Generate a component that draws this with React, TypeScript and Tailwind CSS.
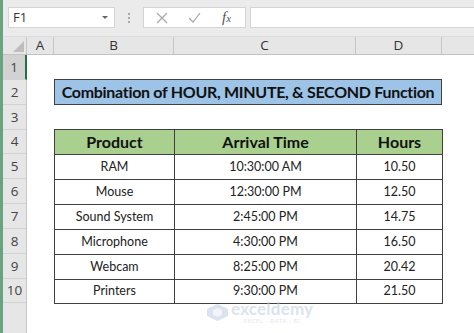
import React from 'react';

const rows = [
  { product: 'RAM', time: '10:30:00 AM', hours: '10.50' },
  { product: 'Mouse', time: '12:30:00 PM', hours: '12.50' },
  { product: 'Sound System', time: '2:45:00 PM', hours: '14.75' },
  { product: 'Microphone', time: '4:30:00 PM', hours: '16.50' },
  { product: 'Webcam', time: '8:25:00 PM', hours: '20.42' },
  { product: 'Printers', time: '9:30:00 PM', hours: '21.50' },
];

// row heights of the sheet rows 1..11
const rowHeights = [25, 25, 25, 24, 25, 25, 25, 25, 25, 24, 40];

const ui = { fontFamily: '"Open Sans", "Noto Sans", sans-serif' };
const cell = { fontFamily: 'Lato, "Open Sans", sans-serif' };

function Toolbar() {
  return (
    <div className="h-[37px] bg-[#ebebeb] flex items-start pt-[7px] border-b border-[#dcdcdc]">
      <div className="ml-[5px] w-[107px] h-[21px] bg-white border border-[#d4d4d4] flex items-center justify-between pl-[4px] pr-[6px]">
        <span className="text-[13px] text-[#333]" style={ui}>
          F1
        </span>
        <span className="w-0 h-0 border-l-[3px] border-r-[3px] border-t-[3px] border-l-transparent border-r-transparent border-t-[#666]" />
      </div>
      <div className="w-[28px] h-[21px] flex flex-col items-center justify-center gap-[2px]">
        <span className="w-[2px] h-[2px] bg-[#a8a8a8]" />
        <span className="w-[2px] h-[2px] bg-[#a8a8a8]" />
        <span className="w-[2px] h-[2px] bg-[#a8a8a8]" />
      </div>
      <div className="w-[103px] h-[21px] bg-white border border-[#d4d4d4] flex items-center">
        <svg width="12" height="12" viewBox="0 0 12 12" className="ml-[12px]">
          <path d="M1 1 L11 11 M11 1 L1 11" stroke="#a6a6a6" strokeWidth="1.2" fill="none" />
        </svg>
        <svg width="13" height="11" viewBox="0 0 13 11" className="ml-[20px]">
          <path d="M1 6 L5 10 L12 1" stroke="#a6a6a6" strokeWidth="1.2" fill="none" />
        </svg>
        <span
          className="ml-[21px] text-[15px] italic text-[#555] leading-none"
          style={{ fontFamily: '"Liberation Serif", serif' }}
        >
          f<span className="text-[11px]">x</span>
        </span>
      </div>
      <div className="ml-[4px] flex-1 h-[21px] bg-white border border-[#d4d4d4] border-r-0" />
    </div>
  );
}

function ColumnHeaders() {
  const cols = [
    { label: 'A', w: 'w-[27px]' },
    { label: 'B', w: 'w-[120px]' },
    { label: 'C', w: 'w-[182px]' },
    { label: 'D', w: 'w-[86px]' },
    { label: '', w: 'flex-1' },
  ];
  return (
    <div className="h-[18px] flex bg-[#e6e6e6] border-b border-[#c2c2c2]" style={ui}>
      <div className="w-[24px] h-full border-r border-[#c6c6c6] flex items-end justify-end pr-[2px] pb-[2px]">
        <svg width="11" height="11" viewBox="0 0 11 11">
          <path d="M11 0 L11 11 L0 11 Z" fill="#bdbdbd" />
        </svg>
      </div>
      {cols.map((c, i) => (
        <div
          key={i}
          className={`${c.w} h-full flex items-center justify-center text-[13.5px] text-[#333] ${
            c.label ? 'border-r border-[#c6c6c6]' : ''
          }`}
        >
          {c.label}
        </div>
      ))}
    </div>
  );
}

function RowHeaders() {
  return (
    <div className="w-[24px] flex flex-col bg-[#e6e6e6] border-r border-[#c6c6c6]" style={ui}>
      {rowHeights.map((h, i) => (
        <div
          key={i}
          style={{ height: h }}
          className={`shrink-0 flex items-center justify-center text-[13.5px] text-[#444] border-b border-[#d2d2d2] ${
            i === 0 ? 'bg-[#d2d2d2] border-r-2 border-r-[#217346] -mr-[1px]' : ''
          }`}
        >
          {i < 10 ? i + 1 : ''}
        </div>
      ))}
    </div>
  );
}

function Sheet() {
  return (
    <div className="flex-1 bg-white relative" style={cell}>
      <div className="h-[25px]" />
      <div className="h-[25px] pl-[27px]">
        <div className="w-[388px] h-[26px] -mt-[1px] bg-[#9dc3e6] border border-[#404040] flex items-center justify-center text-[16px] font-bold text-[#111] tracking-[-0.3px]">
          Combination of HOUR, MINUTE, &amp; SECOND Function
        </div>
      </div>
      <div className="h-[25px]" />
      <div className="pl-[27px]">
        <table className="border-collapse w-[388px] table-fixed text-[#222]">
          <colgroup>
            <col className="w-[120px]" />
            <col className="w-[182px]" />
            <col className="w-[86px]" />
          </colgroup>
          <thead>
            <tr className="h-[24px] bg-[#a9d08e] text-[16px] font-bold text-[#111]">
              <th className="border border-[#404040] p-0">Product</th>
              <th className="border border-[#404040] p-0">Arrival Time</th>
              <th className="border border-[#404040] p-0">Hours</th>
            </tr>
          </thead>
          <tbody>
            {rows.map((r, i) => (
              <tr key={r.product} className={`${i === 5 ? 'h-[24px]' : 'h-[25px]'} text-[12.5px]`}>
                <td className="border border-[#404040] p-0 text-center">{r.product}</td>
                <td className="border border-[#404040] p-0 text-center">{r.time}</td>
                <td className="border border-[#404040] p-0 text-center">{r.hours}</td>
              </tr>
            ))}
          </tbody>
        </table>
      </div>

      {/* watermark */}
      <div className="absolute left-[180px] top-[245px] flex items-center gap-[3px] opacity-50 pointer-events-none">
        <svg width="21" height="17" viewBox="0 0 21 17">
          <path d="M10.5 0 L21 5 L21 12 L10.5 17 L0 12 L0 5 Z" fill="#b9c8e0" />
          <path d="M6 6 L10.5 4 L15 6 L15 11 L10.5 13 L6 11 Z" fill="#e3e9f3" />
        </svg>
        <div className="flex flex-col items-center leading-none">
          <span className="text-[17px] font-bold text-[#b9c8e0] tracking-[0.2px]">exceldemy</span>
          <span className="text-[5px] font-bold text-[#c9d3e3] tracking-[1px] mt-[2px]">EXCEL · DATA · BI</span>
        </div>
      </div>
    </div>
  );
}

export default function App() {
  return (
    <div className="w-[474px] h-[333px] overflow-hidden flex bg-white">
      <div className="w-[3px] h-full bg-[#6aa37f]" />
      <div className="flex-1 flex flex-col min-w-0">
        <Toolbar />
        <ColumnHeaders />
        <div className="flex flex-1 min-h-0">
          <RowHeaders />
          <Sheet />
        </div>
      </div>
    </div>
  );
}
